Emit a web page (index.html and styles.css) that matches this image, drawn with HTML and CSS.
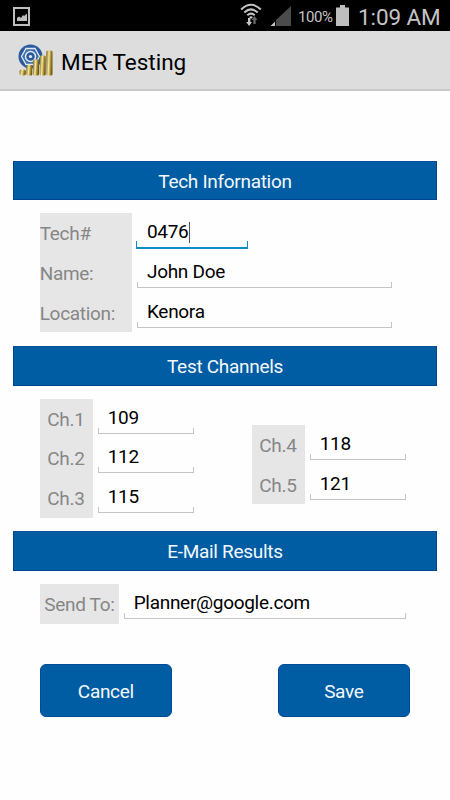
FILE: index.html
```html
<!DOCTYPE html>
<html lang="en">
<head>
<meta charset="utf-8">
<title>MER Testing</title>
<link rel="stylesheet" href="styles.css">
</head>
<body>
<div class="status">
  <svg class="picture" width="18" height="20" viewBox="0 0 18 20">
    <path d="M1 1h15v17H1z" fill="none" stroke="#bebebe" stroke-width="2"/>
    <path d="M4 14v-3l2-1.500 2 1.500 2-3 1 1 3-2.500V14z" fill="#bebebe"/>
  </svg>
  <svg class="wifi" width="22" height="24" viewBox="0 0 22 24">
    <g fill="none" stroke="#c4c4c4" stroke-width="2">
      <path d="M1.200 6.400Q11 -2.800 20.800 6.400"/>
      <path d="M4.300 9.500Q11 3.300 17.700 9.500"/>
      <path d="M7.300 12.300Q11 9 14.700 12.300"/>
    </g>
    <path d="M9 14q2-1.500 4 0l-2 2z" fill="#c4c4c4"/>
    <path d="M8 15h2.400v4H12l-2.900 4-2.900-4H8z" fill="#c4c4c4"/>
    <path d="M13.300 21v-4h-1.700l2.900-4 2.900 4h-1.700v4z" fill="#656565"/>
  </svg>
  <svg class="signal" width="22" height="22" viewBox="0 0 22 22">
    <path d="M21 1v20H6V15z" fill="#4b4b4b"/>
    <path d="M5 16.500V21H.5z" fill="#c4c4c4"/>
  </svg>
  <span class="percent">100%</span>
  <svg class="battery" width="13" height="21" viewBox="0 0 13 21">
    <path d="M4 0h5v2.500h4V21H0V2.500h4z" fill="#bebebe"/>
  </svg>
  <span class="clock">1:09 AM</span>
</div>
<header class="appbar">
  <svg class="logo" width="36" height="34" viewBox="0 0 36 34">
    <defs>
      <linearGradient id="gold" x1="0" x2="1" y1="0" y2=".15">
        <stop offset="0" stop-color="#776016"/>
        <stop offset=".45" stop-color="#f4e9a0"/>
        <stop offset=".7" stop-color="#b79a3d"/>
        <stop offset="1" stop-color="#68540f"/>
      </linearGradient>
    </defs>
    <circle cx="12.500" cy="12.500" r="12" fill="#2a5b9f"/>
    <path d="M8 4.500h9l4.500 8-4.500 8H8l-4.500-8z" fill="#3e6dac" stroke="#e1e8f0" stroke-width="1.300"/>
    <circle cx="12.500" cy="12.500" r="5" fill="#2a5b9f" stroke="#e1e8f0" stroke-width="1.500"/>
    <circle cx="12.500" cy="12.500" r="1.600" fill="#e9eef4"/>
    <g fill="url(#gold)">
      <rect x="1.500" y="25.500" width="6.300" height="6" rx="2"/>
      <rect x="8.300" y="21" width="6" height="10.500" rx="1.500"/>
      <rect x="15" y="15.500" width="6" height="16" rx="1.500"/>
      <rect x="21.700" y="11.500" width="6" height="20" rx="1.500"/>
      <rect x="28.300" y="6.500" width="6.200" height="25" rx="1.500"/>
    </g>
  </svg>
  <h1>MER Testing</h1>
</header>
<main>
  <h2>Tech Infornation</h2>
  <section class="group">
    <div class="labels tech"><span>Tech#</span><span>Name:</span><span>Location:</span></div>
    <div class="fields wide">
      <div class="field focus">0476<i class="caret"></i></div>
      <div class="field">John Doe</div>
      <div class="field">Kenora</div>
    </div>
  </section>
  <h2>Test Channels</h2>
  <section class="group channels">
    <div class="labels ch"><span>Ch.1</span><span>Ch.2</span><span>Ch.3</span></div>
    <div class="fields short">
      <div class="field">109</div>
      <div class="field">112</div>
      <div class="field">115</div>
    </div>
    <div class="pair">
      <div class="labels ch"><span>Ch.4</span><span>Ch.5</span></div>
      <div class="fields short">
        <div class="field">118</div>
        <div class="field">121</div>
      </div>
    </div>
  </section>
  <h2>E-Mail Results</h2>
  <section class="group">
    <div class="labels send"><span>Send To:</span></div>
    <div class="fields mail"><div class="field">Planner@google.com</div></div>
  </section>
  <div class="actions"><button>Cancel</button><button>Save</button></div>
</main>
</body>
</html>
```
FILE: styles.css
```css
* { box-sizing: border-box; }
body {
  margin: 0;
  height: 800px;
  overflow: hidden;
  background: #fefefe;
  color: #000;
  font: 19px/39.7px Roboto, sans-serif;
  letter-spacing: -.3px;
}
.status {
  height: 31px;
  background: #000;
  color: #c4c4c4;
  display: flex;
  align-items: flex-start;
  padding-left: 13px;
}
.status svg { flex: none; }
.picture { margin-top: 7px; }
.wifi { margin: 3px 0 0 209px; }
.signal { margin: 5px 0 0 8px; }
.percent {
  width: 37px;
  margin-left: 6px;
  font-size: 15px;
  line-height: 34px;
  letter-spacing: -.4px;
}
.battery { margin: 5px 0 0 1px; }
.clock {
  margin-left: 9px;
  font-size: 22.5px;
  line-height: 35px;
  letter-spacing: -.1px;
  white-space: nowrap;
}
.appbar {
  height: 60px;
  background: #ddd;
  border-bottom: 2px solid #c8c8c8;
  display: flex;
  align-items: center;
  padding-left: 18px;
}
.logo { flex: none; margin-top: 2px; }
h1 {
  margin: 6px 0 0 7px;
  font-size: 22.5px;
  font-weight: 400;
  letter-spacing: 0;
}
main { padding: 69.6px 13px 0; }
h2 {
  margin: 0;
  height: 39.7px;
  background: #005da3;
  border: 1px solid #00438f;
  border-top-color: #0a4f9a;
  color: #f4f8fc;
  font-size: 19px;
  font-weight: 400;
  line-height: 40px;
  text-align: center;
}
.group {
  display: flex;
  align-items: center;
  padding: 13.1px 0 13.4px 26.700px;
}
.channels { padding-bottom: 13.7px; }
.labels {
  background: #e6e6e6;
  color: #868686;
  display: flex;
  flex-direction: column;
}
.labels span {
  height: 39.7px;
  line-height: 42px;
}
.tech { width: 92.300px; }
.ch { width: 53px; padding-left: 7.500px; }
.send { width: 79px; padding-left: 4.500px; }
.pair {
  display: flex;
  margin: 13.200px 0 0 58px;
}
.fields {
  display: flex;
  flex-direction: column;
  gap: 4.700px;
  margin: 0 0 4.700px 5px;
}
.wide { width: 255px; }
.short { width: 96px; }
.mail { width: 282px; }
.field {
  position: relative;
  height: 35px;
  padding-left: 10px;
  line-height: 37.5px;
  display: flex;
  align-items: flex-start;
}
.field::after {
  content: "";
  position: absolute;
  left: 0;
  right: 0;
  bottom: 0;
  height: 5px;
  border: 1px solid #c4c4c4;
  border-top: 0;
}
.focus { width: 111px; }
.focus::after {
  left: -1px;
  bottom: -1px;
  height: 6px;
  border-color: #0c8cc9;
  border-bottom-width: 2px;
}
.caret {
  width: 1px;
  height: 21px;
  margin-top: 9px;
  background: #555;
}
.actions {
  display: flex;
  justify-content: space-between;
  padding: 26.300px 27px 0 26.700px;
}
button {
  width: 132.300px;
  height: 53px;
  padding: 3px 0 0;
  background: #005da3;
  border: 1px solid #004b98;
  border-radius: 6px;
  color: #f4f8fc;
  font: inherit;
  letter-spacing: inherit;
}
```
